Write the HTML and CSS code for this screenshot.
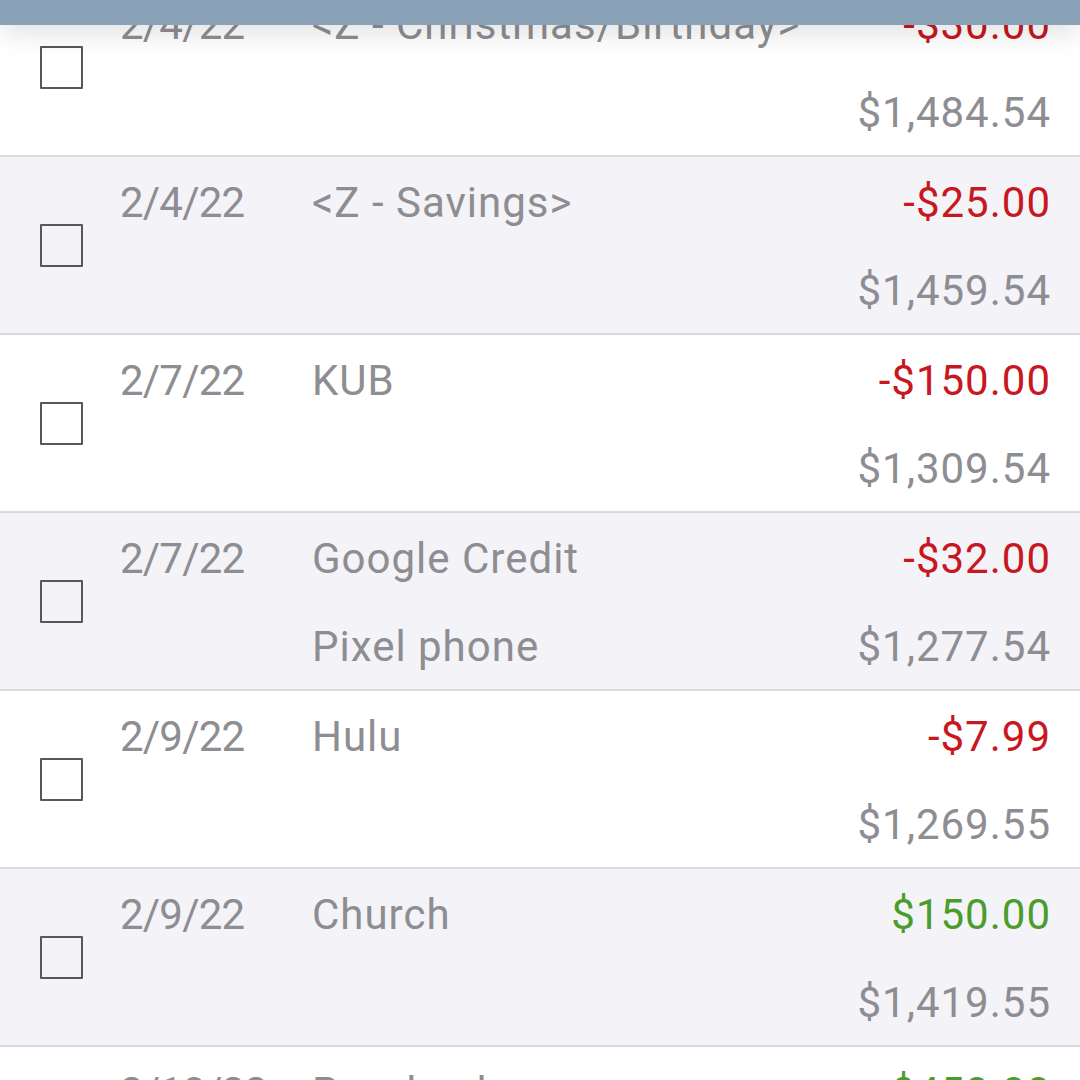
FILE: index.html
```html
<!DOCTYPE html>
<html>
<head>
<meta charset="utf-8">
<link rel="stylesheet" href="styles.css">
</head>
<body>
<div class="screen">
  <div class="topbar"></div>
  <div class="list">
    <div class="row">
      <div class="check"><span class="box"></span></div>
      <div class="date">2/4/22</div>
      <div class="desc">&lt;Z - Christmas/Birthday&gt;</div>
      <div class="amount neg">-$30.00</div>
      <div class="memo"></div>
      <div class="balance">$1,484.54</div>
    </div>
    <div class="row alt">
      <div class="check"><span class="box"></span></div>
      <div class="date">2/4/22</div>
      <div class="desc">&lt;Z - Savings&gt;</div>
      <div class="amount neg">-$25.00</div>
      <div class="memo"></div>
      <div class="balance">$1,459.54</div>
    </div>
    <div class="row">
      <div class="check"><span class="box"></span></div>
      <div class="date">2/7/22</div>
      <div class="desc">KUB</div>
      <div class="amount neg">-$150.00</div>
      <div class="memo"></div>
      <div class="balance">$1,309.54</div>
    </div>
    <div class="row alt">
      <div class="check"><span class="box"></span></div>
      <div class="date">2/7/22</div>
      <div class="desc">Google Credit</div>
      <div class="amount neg">-$32.00</div>
      <div class="memo">Pixel phone</div>
      <div class="balance">$1,277.54</div>
    </div>
    <div class="row">
      <div class="check"><span class="box"></span></div>
      <div class="date">2/9/22</div>
      <div class="desc">Hulu</div>
      <div class="amount neg">-$7.99</div>
      <div class="memo"></div>
      <div class="balance">$1,269.55</div>
    </div>
    <div class="row alt">
      <div class="check"><span class="box"></span></div>
      <div class="date">2/9/22</div>
      <div class="desc">Church</div>
      <div class="amount pos">$150.00</div>
      <div class="memo"></div>
      <div class="balance">$1,419.55</div>
    </div>
    <div class="row">
      <div class="check"><span class="box"></span></div>
      <div class="date">2/10/22</div>
      <div class="desc">Paycheck</div>
      <div class="amount pos">$450.00</div>
      <div class="memo"></div>
      <div class="balance">$1,869.55</div>
    </div>
  </div>
</div>
</body>
</html>
```

FILE: styles.css
```css
* { box-sizing: border-box; }
html, body {
  margin: 0;
  padding: 0;
  background: #ffffff;
}
.screen {
  position: relative;
  width: 1080px;
  height: 1080px;
  overflow: hidden;
  font-family: Roboto, "Liberation Sans", sans-serif;
  font-size: 42px;
  color: #8d8d92;
}
.topbar {
  position: absolute;
  top: 0;
  left: 0;
  right: 0;
  height: 25px;
  background: #8aa2b8;
  box-shadow: 0 4px 30px rgba(0, 0, 0, 0.16);
  z-index: 2;
}
.list {
  margin-top: -21px;
}
.row {
  display: grid;
  grid-template-columns: 120px 192px 1fr auto;
  grid-template-rows: 90px 86px;
  height: 178px;
  border-bottom: 2px solid #dadade;
  background: #ffffff;
  padding-right: 29px;
}
.row.alt {
  background: #f3f3f8;
}
.check {
  grid-row: 1 / 3;
  grid-column: 1;
  display: flex;
  align-items: center;
  padding-left: 40px;
  padding-top: 1px;
}
.box {
  display: block;
  width: 43px;
  height: 43px;
  border: 2px solid #58585c;
  border-radius: 1px;
}
.date, .desc, .amount, .memo, .balance {
  display: flex;
  align-items: center;
  white-space: nowrap;
  letter-spacing: 1px;
}
.date { grid-row: 1; grid-column: 2; letter-spacing: -0.8px; }
.desc { grid-row: 1; grid-column: 3; }
.amount { grid-row: 1; grid-column: 4; justify-content: flex-end; }
.memo { grid-row: 2; grid-column: 3; }
.balance { grid-row: 2; grid-column: 4; justify-content: flex-end; }
.neg { color: #c8171e; }
.pos { color: #4a9c2b; }
```
